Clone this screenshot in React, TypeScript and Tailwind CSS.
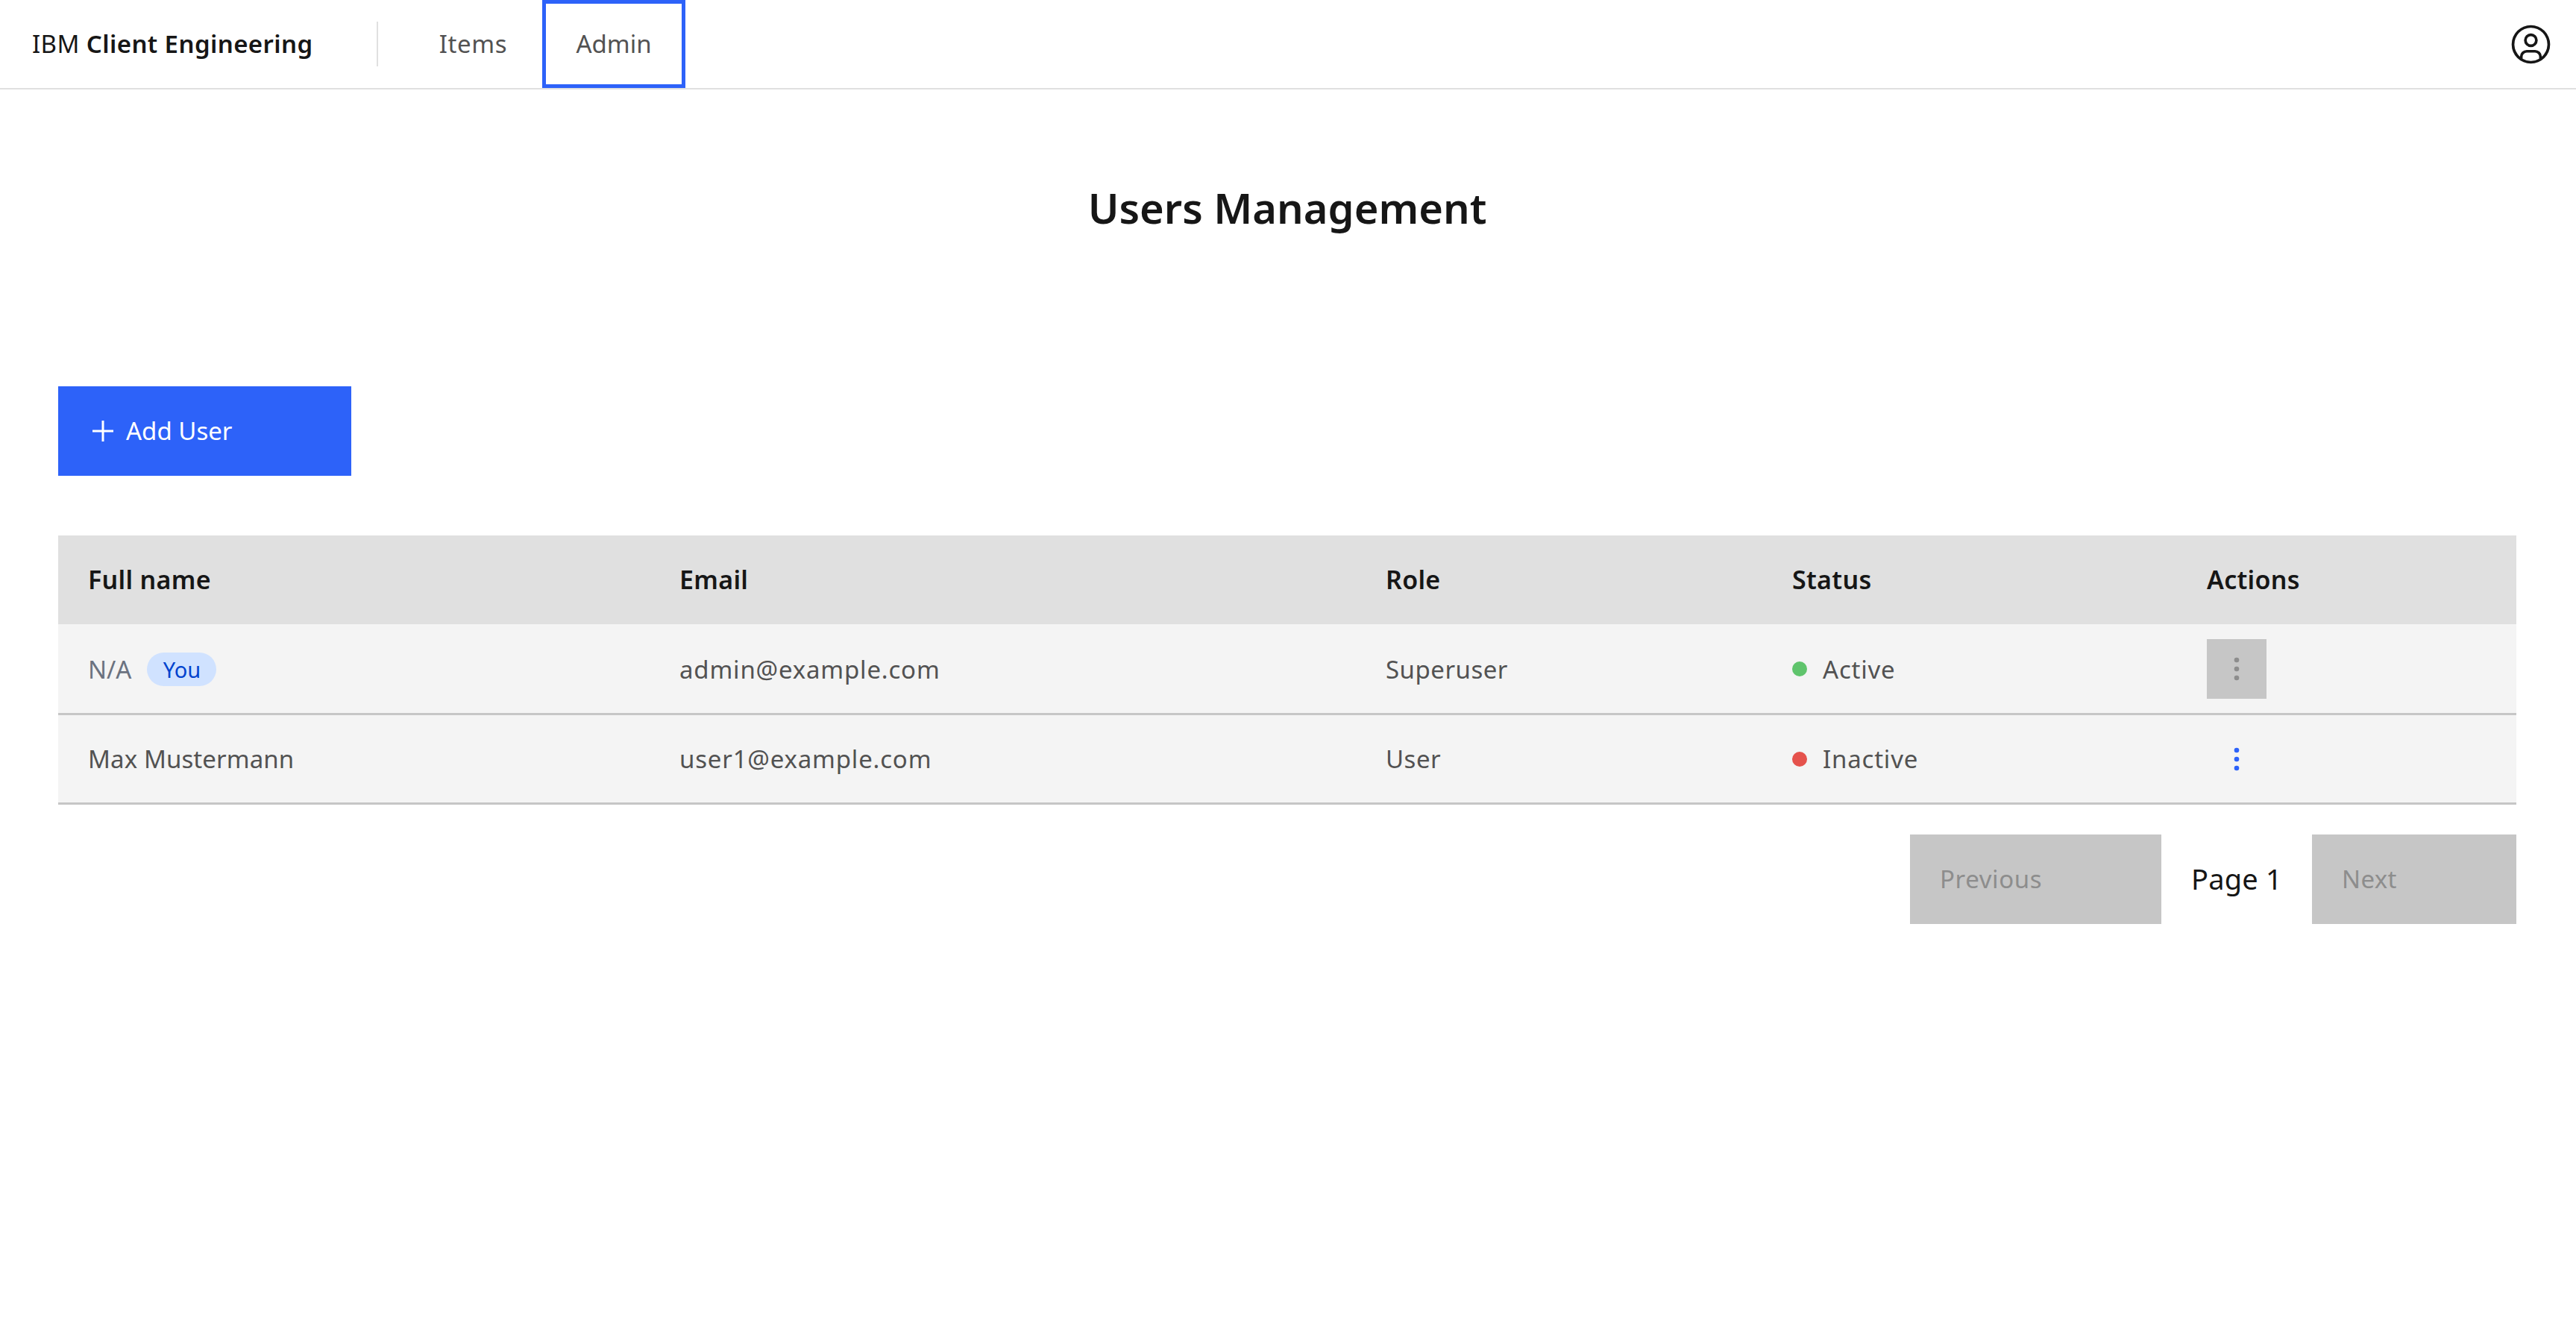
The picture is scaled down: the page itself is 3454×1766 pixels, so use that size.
import React from 'react';

const rows = [
  { name: 'N/A', you: true, email: 'admin@example.com', role: 'Superuser', active: true },
  { name: 'Max Mustermann', you: false, email: 'user1@example.com', role: 'User', active: false },
];

const Kebab: React.FC<{ className: string }> = ({ className }) => (
  <svg viewBox="0 0 32 32" className={className} fill="currentColor">
    <circle cx="16" cy="8" r="2.2" />
    <circle cx="16" cy="16" r="2.2" />
    <circle cx="16" cy="24" r="2.2" />
  </svg>
);

const UserAvatar = () => (
  <svg viewBox="0 0 32 32" className="w-[59px] h-[59px] text-[#161616]" fill="currentColor">
    <path d="M16,8a5,5,0,1,0,5,5A5,5,0,0,0,16,8Zm0,8a3,3,0,1,1,3-3A3.0034,3.0034,0,0,1,16,16Z" />
    <path d="M16,2A14,14,0,1,0,30,16,14.0158,14.0158,0,0,0,16,2ZM10,26.3765V25a3.0033,3.0033,0,0,1,3-3h6a3.0033,3.0033,0,0,1,3,3v1.3765a11.8989,11.8989,0,0,1-12,0Zm13.9925-1.4507A5.0016,5.0016,0,0,0,19,20H13a5.0016,5.0016,0,0,0-4.9925,4.9258,12,12,0,1,1,15.985,0Z" />
  </svg>
);

export default function App() {
  return (
    <div className="min-h-[1766px] bg-white font-['Noto_Sans','Liberation_Sans',sans-serif] text-[#161616]">
      {/* Header */}
      <header className="flex h-[120px] items-center border-b-2 border-[#e0e0e0]">
        <a className="w-[505px] shrink-0 pl-[43px] text-[33px] tracking-[0.4px] whitespace-nowrap">
          IBM <span className="font-semibold">Client Engineering</span>
        </a>
        <div className="h-[60px] w-[2px] bg-[#e0e0e0]"></div>
        <nav className="ml-[42px] flex h-[118px] self-start">
          <a className="flex w-[178px] items-center justify-center pr-[7px] text-[33px] tracking-[0.6px] text-[#525252]">Items</a>
          <a className="flex w-[192px] items-center justify-center border-[5px] border-[#2d62f9] text-[33px] text-[#525252]">Admin</a>
        </nav>
        <div className="ml-auto mr-[31px] flex">
          <UserAvatar />
        </div>
      </header>

      <main className="pl-[78px] pr-[80px]">
        <h1 className="pt-[128px] text-center text-[56px] leading-[60px] font-semibold">Users Management</h1>

        <button className="mt-[210px] flex h-[120px] w-[393px] items-center gap-[17px] bg-[#2d62f9] pl-[46px] text-[33px] text-white">
          <svg viewBox="0 0 28 28" className="h-[28px] w-[28px]" fill="none" stroke="currentColor" strokeWidth="3">
            <path d="M14 0v28M0 14h28" />
          </svg>
          Add User
        </button>

        <table className="mt-[80px] w-full table-fixed border-collapse text-left text-[33px]">
          <thead>
            <tr className="h-[119px] bg-[#e0e0e0] text-[34px] tracking-[0.3px]">
              <th className="w-[794px] pl-[40px] font-semibold">Full name</th>
              <th className="w-[945px] pl-[39px] font-semibold">Email</th>
              <th className="w-[545px] pl-[41px] font-semibold">Role</th>
              <th className="w-[556px] pl-[41px] font-semibold">Status</th>
              <th className="pl-[41px] font-semibold">Actions</th>
            </tr>
          </thead>
          <tbody className="text-[#525252]">
            {rows.map((r) => (
              <tr key={r.email} className="h-[120px] border-b-[3px] border-[#c6c6c6] bg-[#f4f4f4]">
                <td className="pt-[2px] pl-[40px]">
                  <div className="flex items-center">
                    <span className={r.you ? 'text-[#6b7280]' : 'tracking-[0.1px]'}>{r.name}</span>
                    {r.you && (
                      <span className="ml-[21px] flex h-[45px] w-[93px] items-center justify-center rounded-full bg-[#d0e2ff] text-[29px] text-[#0043ce]">
                        You
                      </span>
                    )}
                  </div>
                </td>
                <td className="pt-[2px] pl-[39px] tracking-[0.8px]">{r.email}</td>
                <td className="pt-[2px] pl-[41px] tracking-[0.5px]">{r.role}</td>
                <td className="pt-[2px] pl-[41px] tracking-[0.8px]">
                  <div className="flex items-center gap-[21px]">
                    <span className={r.active ? 'h-[20px] w-[20px] rounded-full bg-[#5fc46c]' : 'h-[20px] w-[20px] rounded-full bg-[#e5524c]'}></span>
                    {r.active ? 'Active' : 'Inactive'}
                  </div>
                </td>
                <td className="pt-[2px] pl-[41px]">
                  <div className={r.active ? 'flex h-[80px] w-[80px] items-center justify-center bg-[#c6c6c6]' : 'flex h-[80px] w-[80px] items-center justify-center'}>
                    <Kebab className={r.active ? 'h-[48px] w-[48px] text-[#8d8d8d]' : 'h-[48px] w-[48px] text-[#2d62f9]'} />
                  </div>
                </td>
              </tr>
            ))}
          </tbody>
        </table>

        <div className="mt-[40px] flex items-center justify-end">
          <button className="flex h-[120px] w-[337px] items-center bg-[#c6c6c6] pl-[40px] text-left text-[33px] tracking-[0.6px] text-[#8d8d8d]">Previous</button>
          <span className="flex w-[202px] justify-center text-[38px] tracking-[0.2px]">Page 1</span>
          <button className="flex h-[120px] w-[274px] items-center bg-[#c6c6c6] pl-[40px] text-left text-[33px] tracking-[0.3px] text-[#8d8d8d]">Next</button>
        </div>
      </main>
    </div>
  );
}
